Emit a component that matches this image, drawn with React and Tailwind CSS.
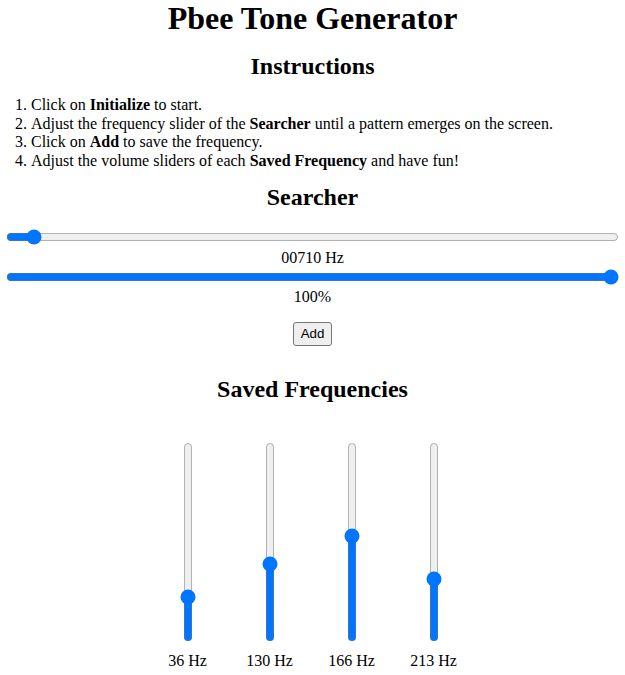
import React, { useState } from "react";

const saved = [
  { hz: 36, vol: 20 },
  { hz: 130, vol: 38 },
  { hz: 166, vol: 53 },
  { hz: 213, vol: 30 },
];

function App() {
  const [freq, setFreq] = useState(710);
  const [vol, setVol] = useState(100);

  return (
    <div className="font-['Liberation_Serif',serif] text-[16px] leading-[1.15] text-black bg-white min-h-screen">
      <h1 className="text-[32px] font-bold text-center m-0">Pbee Tone Generator</h1>

      <h2 className="text-[24px] font-bold text-center mt-[16px]">Instructions</h2>
      <ol className="list-decimal pl-[31px] mt-[16px]">
        <li>Click on <b>Initialize</b> to start.</li>
        <li>Adjust the frequency slider of the <b>Searcher</b> until a pattern emerges on the screen.</li>
        <li>Click on <b>Add</b> to save the frequency.</li>
        <li>Adjust the volume sliders of each <b>Saved Frequency</b> and have fun!</li>
      </ol>

      <h2 className="text-[24px] font-bold text-center mt-[14px]">Searcher</h2>
      <div className="px-[6px] mt-[15px] flex flex-col items-center">
        <input
          type="range"
          min="0"
          max="21000"
          value={freq}
          onChange={(e) => setFreq(Number(e.target.value))}
          className="w-full m-[2px]"
        />
        <div className="mt-[2px]">{String(freq).padStart(5, "0")} Hz</div>
        <input
          type="range"
          min="0"
          max="100"
          value={vol}
          onChange={(e) => setVol(Number(e.target.value))}
          className="w-full m-[2px]"
        />
        <div className="mt-[1px]">{vol}%</div>
        <button className="mt-[16px] font-['Liberation_Sans',Arial,sans-serif] text-[13.33px] leading-normal bg-[#efefef] border border-[#767676] rounded-[3px] px-[7px] py-[1px]">
          Add
        </button>
      </div>

      <h2 className="text-[24px] font-bold text-center mt-[30px]">Saved Frequencies</h2>
      <div className="flex justify-center pr-[4px] mt-[36px]">
        {saved.map((s) => (
          <div key={s.hz} className="w-[82px] flex flex-col items-center">
            <input
              type="range"
              min="0"
              max="100"
              defaultValue={s.vol}
              className="h-[200px] w-[16px] m-[2px] [writing-mode:vertical-lr] [direction:rtl]"
            />
            <div className="mt-[8px]">{s.hz} Hz</div>
          </div>
        ))}
      </div>
    </div>
  );
}

export default App;
